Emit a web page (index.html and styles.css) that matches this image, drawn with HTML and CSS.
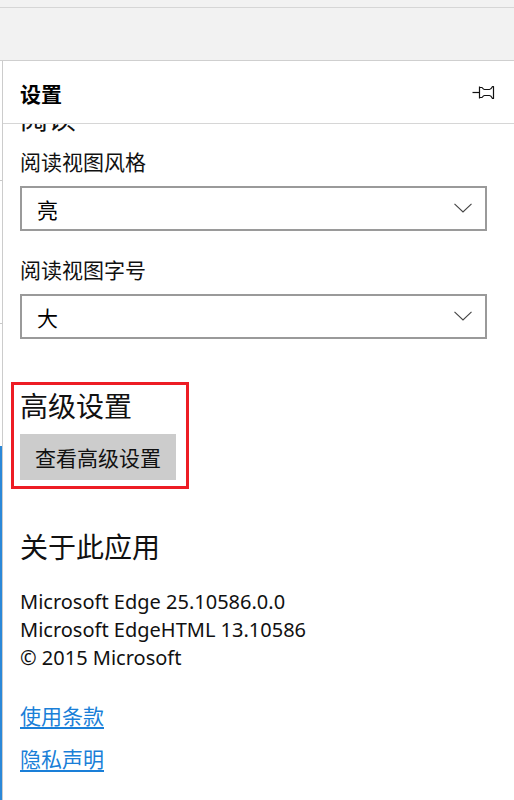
FILE: index.html
```html
<!DOCTYPE html>
<html lang="zh-CN">
<head>
<meta charset="utf-8">
<title>设置</title>
<link rel="stylesheet" href="styles.css">
</head>
<body>
<div class="topbar"><div class="topbar-inner"></div></div>
<div class="main">
  <div class="edge"></div>
  <div class="panel">
    <div class="header">
      <div class="title">设置</div>
      <svg class="pin" width="23" height="14" viewBox="0 0 23 14" aria-hidden="true">
        <path d="M0.5 7.5 H7.5" stroke="#111" stroke-width="1.2" fill="none"/>
        <path d="M7.5 1.5 V13.5 M7.5 2.5 H10 Q11.5 4.5 12.5 4.5 H17.5 Q19 4.5 20.5 1.5 H21.5 V13.5 H20.5 Q19 10.5 17.5 10.5 H12.5 Q11.5 10.5 10 12.5 H7.5" stroke="#111" stroke-width="1.2" fill="none" stroke-linejoin="round"/>
      </svg>
    </div>
    <div class="scroll">
      <div class="section-title cut">阅读</div>
      <div class="label first">阅读视图风格</div>
      <div class="select">
        <span class="value">亮</span>
        <svg class="chev" width="18" height="10" viewBox="0 0 18 10" aria-hidden="true"><path d="M0.5 0.8 L9 9 L17.5 0.8" stroke="#444" stroke-width="1.1" fill="none"/></svg>
      </div>
      <div class="label">阅读视图字号</div>
      <div class="select">
        <span class="value">大</span>
        <svg class="chev" width="18" height="10" viewBox="0 0 18 10" aria-hidden="true"><path d="M0.5 0.8 L9 9 L17.5 0.8" stroke="#444" stroke-width="1.1" fill="none"/></svg>
      </div>
      <div class="highlight">
        <div class="section-title">高级设置</div>
        <div class="button">查看高级设置</div>
      </div>
      <div class="section-title about">关于此应用</div>
      <div class="info">
        <div>Microsoft Edge 25.10586.0.0</div>
        <div>Microsoft EdgeHTML 13.10586</div>
        <div>© 2015 Microsoft</div>
      </div>
      <a class="link first-link" href="#">使用条款</a>
      <a class="link" href="#">隐私声明</a>
    </div>
  </div>
</div>
</body>
</html>
```

FILE: styles.css
```css
html, body {
  margin: 0;
  padding: 0;
  height: 800px;
  overflow: hidden;
}
body {
  background: #f2f2f2;
  font-family: "Noto Sans", "Noto Sans CJK SC", sans-serif;
  color: #000;
}
.topbar {
  box-sizing: border-box;
  height: 61px;
  padding-top: 7px;
  border-bottom: 1px solid #cfcfcf;
}
.topbar-inner {
  border-top: 1px solid #d6d6d6;
  height: 52px;
  background: #f2f2f2;
}
.main {
  display: flex;
  height: 739px;
  background: #fff;
}
.edge {
  width: 2px;
  flex: none;
  border-right: 1px solid #cccccc;
  background:
    linear-gradient(#fff, #fff) 0 0 / 2px 385px no-repeat,
    #2b88d8;
  position: relative;
}
.edge::before, .edge::after {
  content: "";
  position: absolute;
  left: 0;
  width: 2px;
  height: 1px;
  background: #c8c8c8;
}
.edge::before { top: 119px; }
.edge::after { top: 262px; }
.panel {
  flex: 1;
  display: flex;
  flex-direction: column;
  min-width: 0;
}
.header {
  height: 60px;
  border-bottom: 1px solid #d6d6d6;
  display: flex;
  align-items: center;
  justify-content: space-between;
  padding: 0 19px 2px 17px;
  flex: none;
}
.title {
  font-family: "Noto Sans CJK SC", sans-serif;
  font-weight: 700;
  font-size: 21px;
  line-height: 28px;
  padding-top: 3px;
}
.pin {
  display: block;
  margin-top: 2px;
}
.scroll {
  flex: 1;
  overflow: hidden;
  padding: 0 27px 0 17px;
}
.section-title {
  font-family: "Noto Sans CJK SC", sans-serif;
  font-size: 28px;
  line-height: 36px;
  color: #111;
}
.section-title.cut {
  margin-top: -25px;
}
.label {
  font-family: "Noto Sans CJK SC", sans-serif;
  font-size: 21px;
  line-height: 28px;
  margin-top: 24px;
  color: #111;
}
.label.first {
  margin-top: 12px;
}
.select {
  margin-top: 11px;
  height: 45px;
  box-sizing: border-box;
  border: 2px solid #9a9a9a;
  display: flex;
  align-items: center;
  justify-content: space-between;
  padding: 0 13px 0 15px;
}
.value {
  font-family: "Noto Sans CJK SC", sans-serif;
  font-size: 21px;
  line-height: 28px;
}
.chev {
  display: block;
  margin-top: -2px;
}
.highlight {
  margin-top: 43px;
  margin-left: -9px;
  width: fit-content;
  border: 3px solid #ed1c24;
  padding: 2px 10px 6px 6px;
}
.button {
  margin-top: 11px;
  width: 156px;
  height: 46px;
  box-sizing: border-box;
  background: #cccccc;
  font-family: "Noto Sans CJK SC", sans-serif;
  font-size: 21px;
  line-height: 28px;
  display: flex;
  align-items: center;
  justify-content: center;
  color: #111;
}
.section-title.about {
  margin-top: 39px;
}
.info {
  margin-top: 24px;
  font-family: "Noto Sans", "Noto Sans CJK SC", sans-serif;
  font-size: 20px;
  line-height: 28px;
  color: #111;
}
.link {
  display: block;
  width: fit-content;
  font-family: "Noto Sans CJK SC", sans-serif;
  font-size: 21px;
  line-height: 28px;
  color: #1a7fd8;
  text-decoration: underline;
  text-underline-offset: 3px;
  margin-top: 15px;
}
.link.first-link {
  margin-top: 29px;
}
```
